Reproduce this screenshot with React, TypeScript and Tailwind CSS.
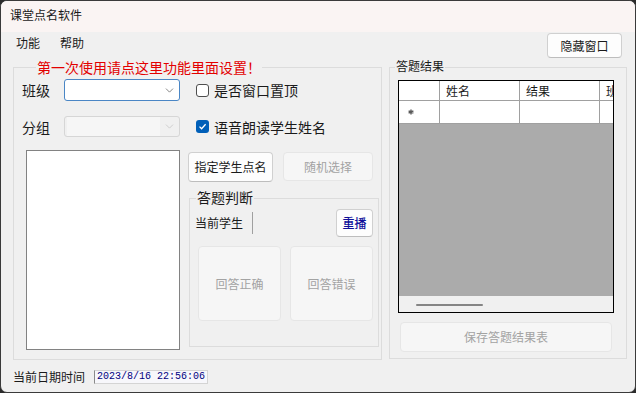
import { ChevronDown } from "lucide-react";

const font = "font-['Noto_Sans_CJK_SC','Noto_Sans',sans-serif]";

function Button({
    label,
    disabled,
    className,
}: {
    label: string;
    disabled?: boolean;
    className: string;
}) {
    return (
        <div
            className={`flex items-center justify-center rounded-[4px] border text-[12px] leading-[16px] ${
                disabled
                    ? "border-[#e6e6e6] bg-[#f6f6f6] text-[#a3a3a3]"
                    : "border-[#d0d0d0] border-b-[#bdbdbd] bg-[#fdfdfd] text-[#1a1a1a]"
            } ${className}`}
        >
            {label}
        </div>
    );
}

function Combo({ disabled }: { disabled?: boolean }) {
    return (
        <div
            className={`flex h-full w-[116px] items-center rounded-[3px] border ${
                disabled ? "border-[#d6d6d6] bg-[#f0f0f0]" : "border-[#4a86c5] bg-white"
            }`}
        >
            <div className={`h-full flex-1 ${disabled ? "my-[2px] ml-[2px] bg-[#f6f6f6]" : ""}`} />
            <ChevronDown
                size={13}
                strokeWidth={1.4}
                className={`mx-[3px] ${disabled ? "text-[#c4c4c4]" : "text-[#606060]"}`}
            />
        </div>
    );
}

function Checkbox({ checked, label }: { checked?: boolean; label: string }) {
    return (
        <div className="flex items-center">
            {checked ? (
                <div className="flex h-[13px] w-[13px] items-center justify-center rounded-[3px] bg-[#005fb8]">
                    <svg width="9" height="9" viewBox="0 0 9 9">
                        <path d="M1.5 4.6 L3.6 6.7 L7.6 2.2" fill="none" stroke="white" strokeWidth="1.3" />
                    </svg>
                </div>
            ) : (
                <div className="h-[13px] w-[13px] rounded-[3px] border border-[#4e4e4e] bg-white" />
            )}
            <span className="ml-[5px] text-[14px] leading-[18px] text-[#1a1a1a]">{label}</span>
        </div>
    );
}

export default function App() {
    return (
        <div className={`h-[393px] w-[636px] bg-[#2b2b2b] ${font}`}>
            <div className="flex h-full w-full flex-col overflow-hidden rounded-[7px] border border-[#3a3a3a] bg-[#f0f0f0] text-[#1a1a1a]">
                {/* Title bar */}
                <div className="flex h-[31px] shrink-0 items-start bg-[#faf4f3] pl-[9px] pt-[6px] text-[12px] leading-[16px]">
                    课堂点名软件
                </div>

                {/* Menu + hide button */}
                <div className="flex h-[35px] shrink-0 items-start justify-between">
                    <div className="mt-[3px] flex gap-[20px] pl-[15px] text-[12px] leading-[16px]">
                        <span>功能</span>
                        <span>帮助</span>
                    </div>
                    <Button label="隐藏窗口" className="mr-[13px] mt-[1px] h-[25px] w-[75px]" />
                </div>

                {/* Main area */}
                <div className="flex h-[293px] shrink-0 gap-[7px] pl-[12px]">
                    {/* Left group */}
                    <div className="relative h-full w-[369px] border border-[#dcdcdc]">
                        <span className="absolute left-[22px] top-[-10px] bg-[#f0f0f0] px-[1px] text-[14px] leading-[18px] text-[#e30000]">
                            第一次使用请点这里功能里面设置！
                        </span>
                        <div className="pl-[8px] pt-[11px]">
                            <div className="flex h-[22px] items-center">
                                <span className="w-[42px] text-[14px] leading-[18px]">班级</span>
                                <Combo />
                                <div className="ml-[16px]">
                                    <Checkbox label="是否窗口置顶" />
                                </div>
                            </div>
                            <div className="mt-[15px] flex h-[21px] items-center">
                                <span className="w-[42px] text-[14px] leading-[18px]">分组</span>
                                <Combo disabled />
                                <div className="ml-[16px]">
                                    <Checkbox checked label="语音朗读学生姓名" />
                                </div>
                            </div>
                            <div className="mt-[13px] flex">
                                <div className="ml-[4px] h-[200px] w-[154px] border border-[#828282] bg-white" />
                                <div className="ml-[8px] flex flex-col">
                                    <div className="mt-[2px] flex items-start">
                                        <Button label="指定学生点名" className="h-[30px] w-[85px]" />
                                        <Button label="随机选择" disabled className="ml-[10px] h-[29px] w-[90px]" />
                                    </div>
                                    {/* 答题判断 */}
                                    <div className="relative ml-[1px] mt-[16px] h-[149px] w-[190px] border border-[#dcdcdc]">
                                        <span className="absolute left-[6px] top-[-11px] bg-[#f0f0f0] px-[1px] text-[14px] leading-[18px]">
                                            答题判断
                                        </span>
                                        <div className="mt-[10px] flex h-[28px] items-center pl-[5px] pr-[5px]">
                                            <span className="text-[12px] leading-[16px]">当前学生</span>
                                            <div className="ml-[9px] h-[22px] w-px bg-[#a0a0a0]" />
                                            <div className="ml-auto flex h-[28px] w-[37px] items-center justify-center rounded-[4px] border border-[#d0d0d0] border-b-[#bdbdbd] bg-[#fdfdfd] text-[12px] font-medium leading-[16px] text-[#10109a]">
                                                重播
                                            </div>
                                        </div>
                                        <div className="mt-[9px] flex gap-[9px] pl-[8px]">
                                            <Button label="回答正确" disabled className="h-[75px] w-[83px]" />
                                            <Button label="回答错误" disabled className="h-[75px] w-[83px]" />
                                        </div>
                                    </div>
                                </div>
                            </div>
                        </div>
                    </div>

                    {/* Right group */}
                    <div className="relative h-[292px] w-[238px] border border-[#dcdcdc]">
                        <span className="absolute left-[5px] top-[-10px] bg-[#f0f0f0] px-[1px] text-[12px] leading-[16px]">
                            答题结果
                        </span>
                        <div className="ml-[8px] mt-[12px] flex h-[233px] w-[216px] flex-col border border-black">
                            <div className="flex h-[20px] shrink-0 border-b border-[#a0a0a0] bg-white text-[12px] leading-[16px]">
                                <div className="w-[41px] border-r border-[#a0a0a0]" />
                                <div className="flex w-[80px] items-center border-r border-[#a0a0a0] pl-[6px]">姓名</div>
                                <div className="flex w-[80px] items-center border-r border-[#a0a0a0] pl-[6px]">结果</div>
                                <div className="flex flex-1 items-center overflow-hidden whitespace-nowrap pl-[6px]">班级</div>
                            </div>
                            <div className="flex h-[23px] shrink-0 border-b border-[#a0a0a0] bg-white">
                                <div className="flex w-[41px] items-center border-r border-[#a0a0a0] pl-[9px]">
                                    <svg width="6" height="6" viewBox="0 0 6 6">
                                        <path d="M3 0.5 V5.5 M0.6 1.8 L5.4 4.2 M0.6 4.2 L5.4 1.8" stroke="#5a5a5a" strokeWidth="1.4" />
                                    </svg>
                                </div>
                                <div className="w-[80px] border-r border-[#a0a0a0]" />
                                <div className="w-[80px] border-r border-[#a0a0a0]" />
                                <div className="flex-1" />
                            </div>
                            <div className="flex-1 bg-[#ababab]" />
                            <div className="flex h-[16px] shrink-0 items-center bg-[#f0f0f0] pl-[17px] pt-[2px]">
                                <div className="h-[2px] w-[67px] rounded-full bg-[#858585]" />
                            </div>
                        </div>
                        <Button label="保存答题结果表" disabled className="ml-[10px] mt-[9px] h-[30px] w-[212px]" />
                    </div>
                </div>

                {/* Status */}
                <div className="flex flex-1 items-center pb-[1px] pl-[12px] pt-[3px]">
                    <span className="text-[12px] leading-[16px]">当前日期时间</span>
                    <div className="ml-[9px] flex h-[14px] w-[114px] items-center border border-[#d4d4d4] border-l-[#8a8a8a] bg-[#f7f7fb] pl-[2px] font-['Liberation_Mono',monospace] text-[10px] leading-[12px] text-[#000080]">
                        2023/8/16 22:56:06
                    </div>
                </div>
            </div>
        </div>
    );
}
